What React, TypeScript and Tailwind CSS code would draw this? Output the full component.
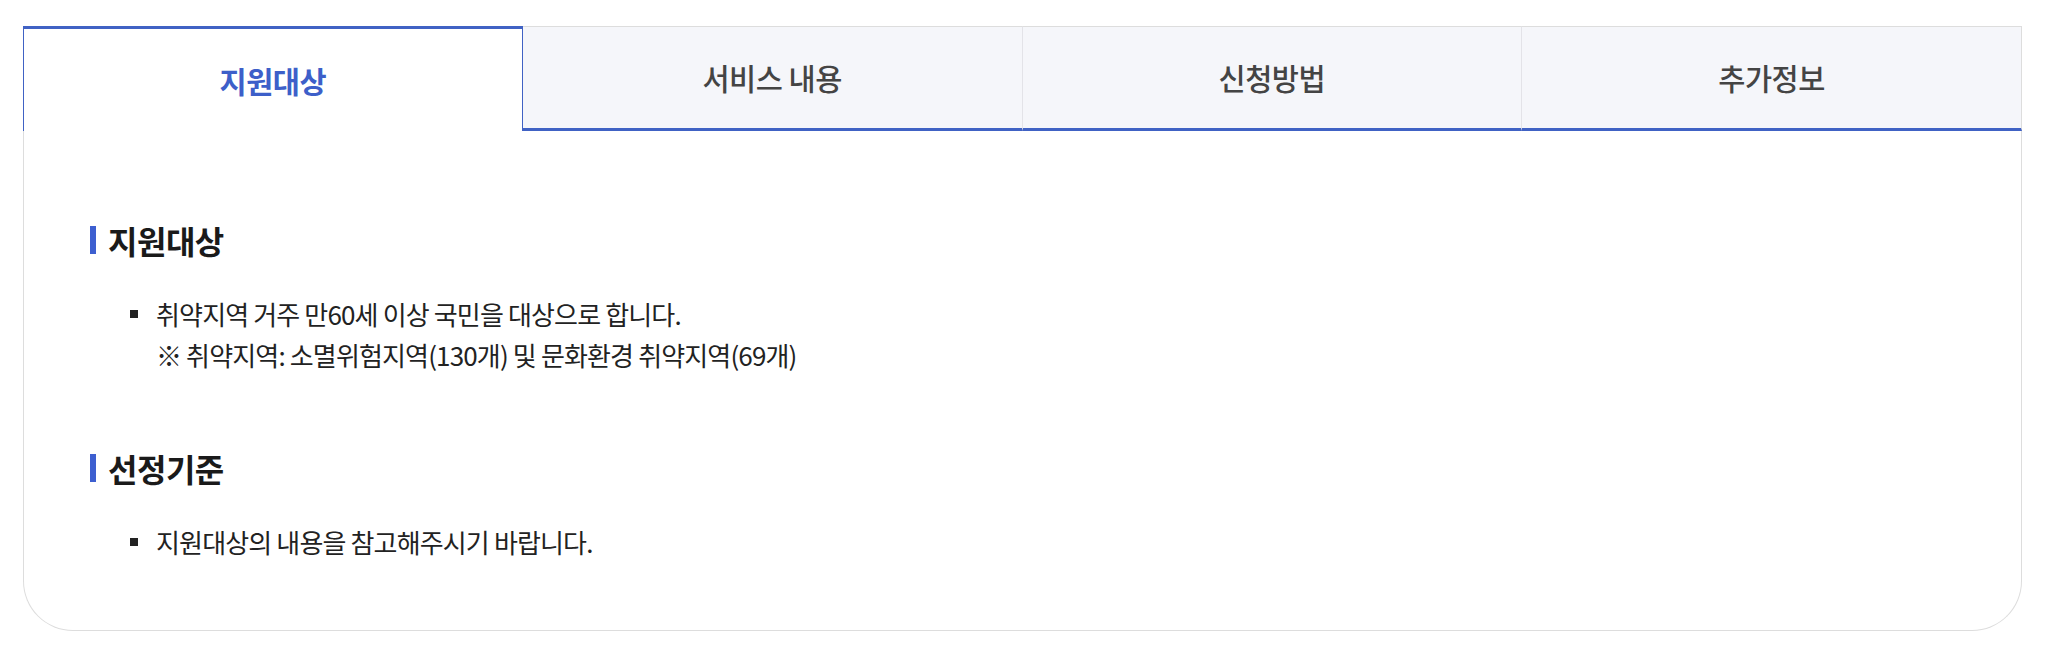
const tabs = ['지원대상', '서비스 내용', '신청방법', '추가정보'];

function Bullet({ children }: { children: React.ReactNode }) {
  return (
    <li className="flex items-start">
      <span className="mt-[17px] ml-[40px] mr-[18px] h-2 w-2 shrink-0 bg-[#222]" />
      <div>{children}</div>
    </li>
  );
}

function SectionTitle({ children }: { children: React.ReactNode }) {
  return (
    <h3 className="flex items-center text-[32px] font-bold leading-[36px] tracking-[-0.5px] text-[#1a1a1a]">
      <span className="mr-3 h-[28px] w-[6px] bg-[#3d5fd0]" />
      {children}
    </h3>
  );
}

export default function App() {
  return (
    <div
      className="min-h-screen bg-white px-[23px] pt-[26px]"
      style={{ fontFamily: '"Noto Sans CJK KR", "Noto Sans", sans-serif' }}
    >
      <div className="w-[1999px]">
        <ul className="grid grid-cols-4">
          {tabs.map((t, i) =>
            i === 0 ? (
              <li
                key={t}
                className="flex h-[105px] items-center justify-center border-x border-t-[3px] border-[#4062c4] bg-white text-[29.5px] font-bold tracking-[-0.5px] text-[#3d5fc9]"
              >
                {t}
              </li>
            ) : (
              <li
                key={t}
                className={
                  'flex h-[105px] items-center justify-center border-t border-b-[3px] border-t-[#dddddd] border-b-[#4062c4] bg-[#f5f6fa] text-[29.5px] font-medium tracking-[-0.5px] text-[#444] ' +
                  (i === 3 ? 'border-r border-r-[#dddddd]' : 'border-r border-r-[#e3e3e8]')
                }
              >
                {t}
              </li>
            )
          )}
        </ul>

        <div className="rounded-b-[50px] border-x border-b border-[#dddddd] px-[66px] pt-[91px] pb-[68px]">
          <SectionTitle>지원대상</SectionTitle>
          <ul className="mt-[35px] text-[26px] leading-[41px] tracking-[-0.85px] text-[#222]">
            <Bullet>
              <p>취약지역 거주 만60세 이상 국민을 대상으로 합니다.</p>
              <p>※ 취약지역: 소멸위험지역(130개) 및 문화환경 취약지역(69개)</p>
            </Bullet>
          </ul>

          <div className="mt-[75px]">
            <SectionTitle>선정기준</SectionTitle>
          </div>
          <ul className="mt-[35px] text-[26px] leading-[41px] tracking-[-0.85px] text-[#222]">
            <Bullet>
              <p>지원대상의 내용을 참고해주시기 바랍니다.</p>
            </Bullet>
          </ul>
        </div>
      </div>
    </div>
  );
}
